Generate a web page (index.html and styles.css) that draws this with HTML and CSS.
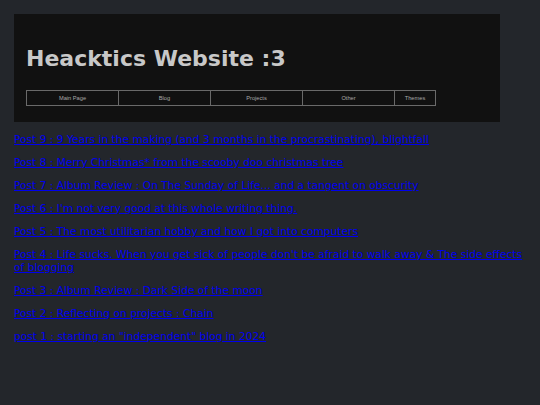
FILE: index.html
```html
<!DOCTYPE html>
<html>
<head>
<meta charset="utf-8">
<link rel="stylesheet" href="styles.css">
</head>
<body>
<div class="header">
  <h1 class="title">Heacktics Website :3</h1>
  <table class="nav">
    <tr>
      <td class="nav-cell">Main Page</td>
      <td class="nav-cell">Blog</td>
      <td class="nav-cell">Projects</td>
      <td class="nav-cell">Other</td>
      <td class="nav-cell nav-small">Themes</td>
    </tr>
  </table>
</div>
<div class="posts">
  <p class="post"><a href="#">Post 9 : 9 Years in the making (and 3 months in the procrastinating), blightfall</a></p>
  <p class="post"><a href="#">Post 8 : Merry Christmas* from the scooby doo christmas tree</a></p>
  <p class="post"><a href="#">Post 7 : Album Review : On The Sunday of Life... and a tangent on obscurity</a></p>
  <p class="post"><a href="#">Post 6 : I'm not very good at this whole writing thing.</a></p>
  <p class="post"><a href="#">Post 5 : The most utilitarian hobby and how I got into computers</a></p>
  <p class="post"><a href="#">Post 4 : Life sucks. When you get sick of people don't be afraid to walk away &amp; The side effects of blogging</a></p>
  <p class="post"><a href="#">Post 3 : Album Review : Dark Side of the moon</a></p>
  <p class="post"><a href="#">Post 2 : Reflecting on projects : Chain</a></p>
  <p class="post"><a href="#">post 1 : starting an "independent" blog in 2024</a></p>
</div>
</body>
</html>
```

FILE: styles.css
```css
html, body {
  background: #23262b;
}
body {
  margin: 14px;
  font-family: "DejaVu Sans", Verdana, sans-serif;
}
.header {
  width: 486px;
  box-sizing: border-box;
  background: #111111;
  padding: 32px 12px 16px;
}
.title {
  margin: 0 0 18px;
  font-family: "DejaVu Sans", Verdana, sans-serif;
  font-weight: bold;
  font-size: 22px;
  line-height: 26px;
  color: #c8c8c8;
}
.nav {
  border-collapse: collapse;
  font-family: "Liberation Sans", Arial, sans-serif;
}
.nav-cell {
  border: 1px solid #6a6a6a;
  width: 91px;
  height: 14px;
  padding: 0;
  text-align: center;
  font-size: 5.7px;
  color: #a8a8a8;
}
.nav-small {
  width: 40px;
}
.posts {
  padding-top: 11px;
}
.post {
  margin: 0 0 10px;
  font-size: 10.67px;
  line-height: 13px;
}
.post a {
  color: #0000ee;
}
```
